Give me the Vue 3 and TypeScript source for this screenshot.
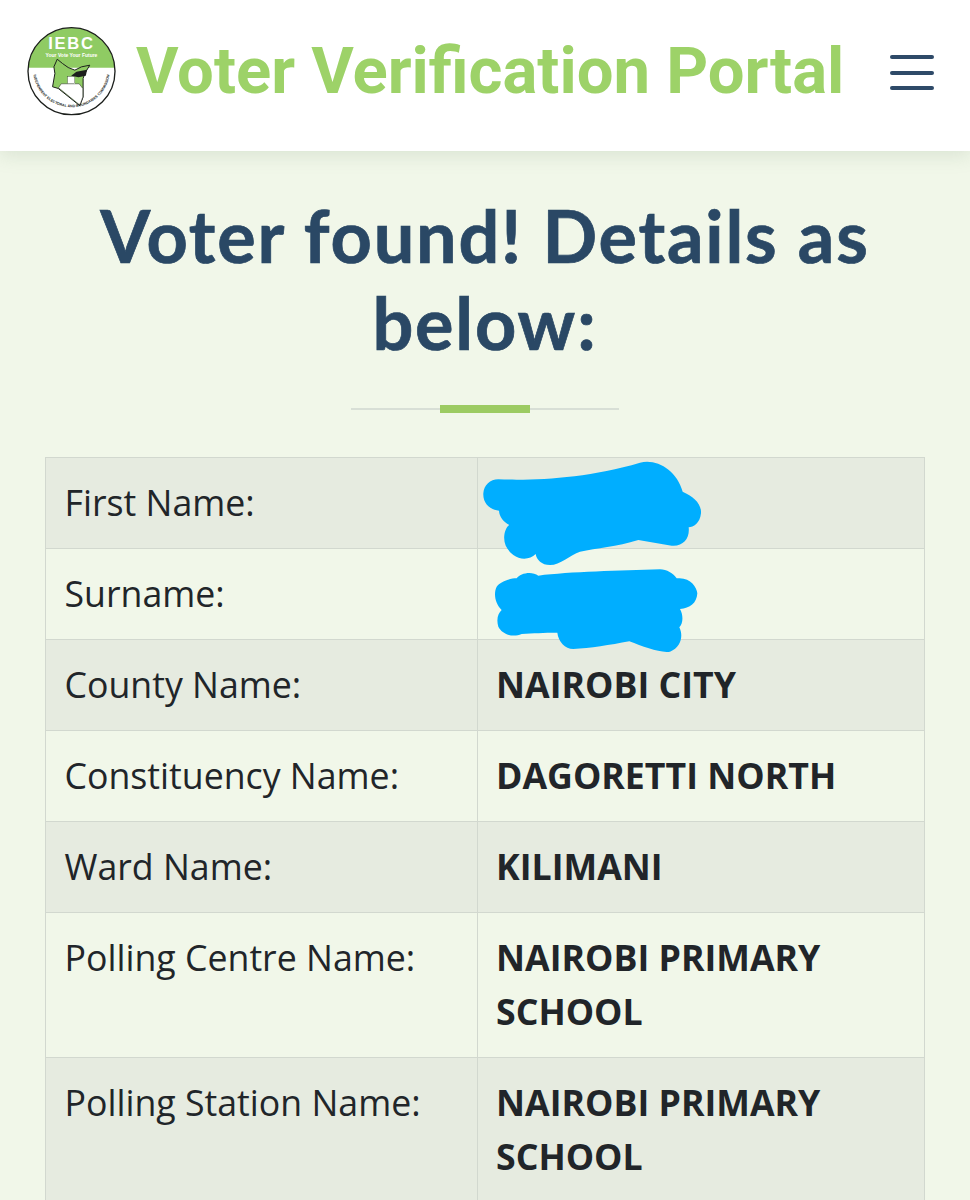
<script setup lang="ts">
const rows: { label: string; value: string }[] = [
  { label: 'First Name:', value: '' },
  { label: 'Surname:', value: '' },
  { label: 'County Name:', value: 'NAIROBI CITY' },
  { label: 'Constituency Name:', value: 'DAGORETTI NORTH' },
  { label: 'Ward Name:', value: 'KILIMANI' },
  { label: 'Polling Centre Name:', value: 'NAIROBI PRIMARY SCHOOL' },
  { label: 'Polling Station Name:', value: 'NAIROBI PRIMARY SCHOOL' },
]
</script>

<template>
  <div class="page">
    <header class="header">
      <svg class="logo" viewBox="78 82 274 274" aria-hidden="true">
        <defs>
          <clipPath id="top-clip"><rect x="78" y="82" width="274" height="126" /></clipPath>
          <path id="arc" d="M100 226 A116 116 0 0 0 330 226" fill="none" />
        </defs>
        <circle cx="215" cy="218" r="131" fill="#fff" />
        <circle cx="215" cy="218" r="131" fill="#8fcb63" clip-path="url(#top-clip)" />
        <circle cx="215" cy="218" r="131" fill="none" stroke="#1c1f1c" stroke-width="4" />
        <text x="215" y="150" class="logo-title">IEBC</text>
        <text x="215" y="175" class="logo-tag">Your Vote Your Future</text>
        <path d="M172 182 L188 195 L205 207 L225 215 L245 205 L270 200 L255 225 L250 240 L250 296 L240 322 L175 270 L158 265 L165 225 L162 205 Z" fill="#8fcb63" stroke="#1c1f1c" stroke-width="3" />
        <path d="M176 268 L184 256 L238 256 L249 270 L249 296 L240 320 Z" fill="#fff" stroke="#1c1f1c" stroke-width="1.5" />
        <rect x="203" y="234" width="22" height="22" fill="#fff" stroke="#1c1f1c" stroke-width="1" />
        <path d="M214 232 L230 220 L262 214 L258 232 L236 236 Z" fill="#1c1f1c" />
        <text class="logo-arc"><textPath href="#arc" startOffset="50%">INDEPENDENT ELECTORAL AND BOUNDARIES COMMISSION</textPath></text>
      </svg>
      <div class="brand">Voter Verification Portal</div>
      <button class="menu" type="button" aria-label="Menu">
        <span></span><span></span><span></span>
      </button>
    </header>

    <main class="main">
      <h1 class="title">Voter found! Details as below:</h1>
      <div class="divider"><span></span></div>

      <div class="table-wrap">
        <table class="table">
          <tbody>
            <tr v-for="row in rows" :key="row.label">
              <td class="label">{{ row.label }}</td>
              <td class="value">{{ row.value || '\u00a0' }}</td>
            </tr>
          </tbody>
        </table>
        <svg class="scribble" viewBox="0 0 750 630" aria-hidden="true">
          <path d="M85 88 C200 92 350 85 510 38 C560 25 620 60 638 125 C670 140 695 160 693 190 C690 220 670 232 656 232 C660 265 640 290 605 287 L505 270 C440 290 380 295 330 305 C300 315 270 345 240 345 C215 345 200 330 197 312 C180 330 150 330 130 315 C110 300 100 280 103 255 C105 240 112 228 118 225 C100 215 88 200 87 182 C60 180 38 160 40 130 C42 105 60 88 85 88 Z" />
          <path d="M140 385 C150 370 185 362 205 377 C300 365 450 362 570 358 C590 358 610 370 620 385 C660 380 680 410 682 430 C680 460 660 475 630 477 C640 495 640 520 628 532 C640 555 635 590 600 605 C570 610 520 590 478 574 C420 585 360 595 310 597 C285 597 265 575 262 548 C220 548 190 550 155 552 C125 565 95 550 85 530 C78 505 85 490 95 480 C75 460 70 430 80 410 C90 395 120 385 140 385 Z" />
        </svg>
      </div>
    </main>
  </div>
</template>

<style>
html, body { margin: 0; background: #f1f7e9; }
</style>

<style scoped>
.page {
  width: 970px;
  height: 1200px;
  overflow: hidden;
  background: #f1f7e9;
  font-family: "Open Sans", sans-serif;
  color: #212529;
}
.header {
  position: relative;
  z-index: 1;
  height: 151px;
  box-sizing: border-box;
  padding: 0 36px 8px 26px;
  display: flex;
  align-items: center;
  background: #fff;
  box-shadow: 0 4px 18px rgba(120, 150, 120, 0.2);
}
.logo { width: 91px; height: 91px; flex: none; }
.logo-title { font: 700 50px "Liberation Sans", sans-serif; letter-spacing: 5px; fill: #fff; text-anchor: middle; }
.logo-tag { font: 700 15px "Liberation Sans", sans-serif; fill: #fff; text-anchor: middle; }
.logo-arc { font: 700 11px "Liberation Sans", sans-serif; fill: #1c1f1c; text-anchor: middle; }
.brand {
  margin-left: 19px;
  flex: 1;
  font: 700 65.2px/1.2 Roboto, sans-serif;
  color: #9dd268;
  white-space: nowrap;
}
.menu {
  width: 44px;
  height: 35px;
  margin-top: 2px;
  padding: 0;
  border: 0;
  background: none;
  display: flex;
  flex-direction: column;
  justify-content: space-between;
}
.menu span { display: block; height: 4px; border-radius: 2px; background: #2e4a68; }
.main { padding: 0 45px; }
.title {
  margin: 41px -10px 0;
  font: 700 72px/87px Lato, sans-serif;
  letter-spacing: 1.8px;
  -webkit-text-stroke: 0.7px #2a4865;
  color: #2a4865;
  text-align: center;
}
.divider {
  position: relative;
  width: 268px;
  height: 2px;
  margin: 42px auto 0;
  background: #d8dfd6;
}
.divider span {
  position: absolute;
  left: 89px;
  top: -3px;
  width: 90px;
  height: 8px;
  background: #9ccb62;
}
.table-wrap { position: relative; margin-top: 47px; }
.table {
  width: 880px;
  border-collapse: collapse;
  table-layout: fixed;
  font-size: 35.7px;
  line-height: 54px;
}
.table tr:nth-child(odd) { background: #e6ebe0; }
.table td {
  padding: 17px 19px 19px 18.5px;
  border: 1px solid #d2d8cf;
  vertical-align: top;
}
.label { width: 393px; }
.value { font-weight: 700; }
.scribble {
  position: absolute;
  left: 425px;
  top: -7px;
  width: 250px;
  height: 210px;
  fill: #00aeff;
}
</style>
